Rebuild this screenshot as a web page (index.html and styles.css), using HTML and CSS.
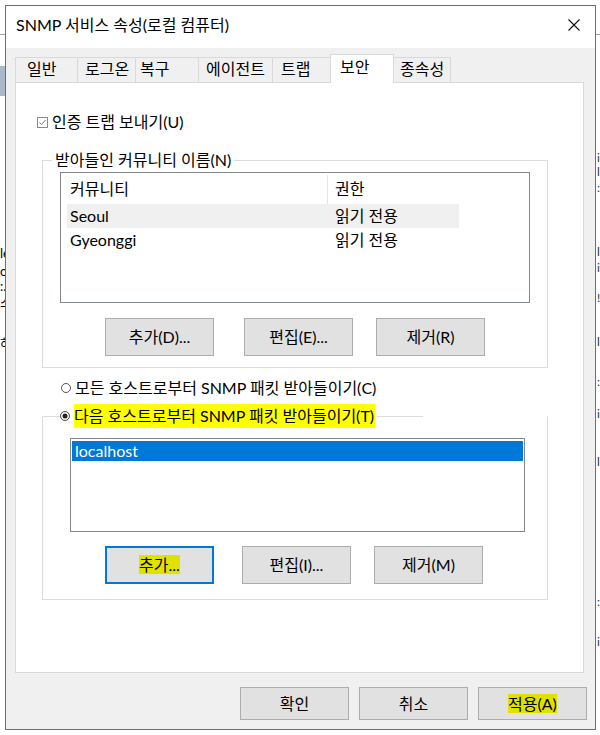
FILE: index.html
```html
<!DOCTYPE html>
<html lang="ko">
<head>
<meta charset="utf-8">
<link rel="stylesheet" href="styles.css">
</head>
<body>
<div class="desk-left">
  <div class="dl-blue"></div>
  <p class="dl-line l1">le</p>
  <p class="dl-line l2">on</p>
  <p class="dl-line l3">:.</p>
  <p class="dl-line l4">스</p>
  <p class="dl-line l5">하</p>
</div>
<div class="desk-right">
  <p class="dr-line d1">i</p>
  <p class="dr-line d2">l</p>
  <p class="dr-line d3">:</p>
  <p class="dr-line d4">l</p>
  <p class="dr-line d5">i</p>
  <p class="dr-line d6">!</p>
  <p class="dr-line d7">l</p>
  <p class="dr-line d8">:</p>
  <p class="dr-line d9">i</p>
  <p class="dr-line d10">l</p>
  <p class="dr-line d11">:</p>
  <p class="dr-line d12">i</p>
</div>
<div class="dialog">
  <div class="titlebar">
    <span class="title">SNMP 서비스 속성(로컬 컴퓨터)</span>
    <svg class="close" width="12" height="12" viewBox="0 0 12 12"><path d="M0.5 0.5 L11.5 11.5 M11.5 0.5 L0.5 11.5" stroke="#111" stroke-width="1.1" fill="none"/></svg>
  </div>
  <div class="client">
    <div class="tabs">
      <div class="tab t1">일반</div>
      <div class="tab t2">로그온</div>
      <div class="tab t3">복구</div>
      <div class="tab t4">에이전트</div>
      <div class="tab t5">트랩</div>
      <div class="tab t6 active">보안</div>
      <div class="tab t7">종속성</div>
    </div>
    <div class="panel">
      <div class="check">
        <svg class="checkbox" width="11" height="11" viewBox="0 0 11 11"><rect x="0.5" y="0.5" width="10" height="10" fill="#fff" stroke="#8a8a8a"/><path d="M2.5 5.5 L4.5 7.5 L8.5 3" stroke="#777" stroke-width="1" fill="none"/></svg>
        <span>인증 트랩 보내기(U)</span>
      </div>
      <fieldset class="group g1">
        <legend class="glabel">받아들인 커뮤니티 이름(N)</legend>
        <div class="listview">
          <div class="lv-header">
            <span class="col c1">커뮤니티</span>
            <span class="col c2">권한</span>
          </div>
          <div class="lv-row hot">
            <span class="col c1">Seoul</span>
            <span class="col c2">읽기 전용</span>
          </div>
          <div class="lv-row">
            <span class="col c1">Gyeonggi</span>
            <span class="col c2">읽기 전용</span>
          </div>
        </div>
        <div class="btnrow row1">
          <button class="btn b1">추가(D)...</button>
          <button class="btn b2">편집(E)...</button>
          <button class="btn b3">제거(R)</button>
        </div>
      </fieldset>
      <div class="radio r1">
        <svg class="rdot" width="10" height="10" viewBox="0 0 10 10"><circle cx="5" cy="5" r="4.5" fill="#fff" stroke="#555"/></svg>
        <span>모든 호스트로부터 SNMP 패킷 받아들이기(C)</span>
      </div>
      <fieldset class="group g2">
        <legend class="radio r2">
          <svg class="rdot" width="10" height="10" viewBox="0 0 10 10"><circle cx="5" cy="5" r="4.5" fill="#fff" stroke="#444"/><circle cx="5" cy="5" r="2.5" fill="#222"/></svg>
          <span class="hl">다음 호스트로부터 SNMP 패킷 받아들이기(T)</span>
        </legend>
        <div class="listbox">
          <div class="lb-item sel">localhost</div>
        </div>
        <div class="btnrow row2">
          <button class="btn b1 focus"><span class="hl-btn">추가...</span></button>
          <button class="btn b2">편집(I)...</button>
          <button class="btn b3">제거(M)</button>
        </div>
      </fieldset>
    </div>
    <div class="footer">
      <button class="btn fb">확인</button>
      <button class="btn fb">취소</button>
      <button class="btn fb"><span class="hl-btn">적용(A)</span></button>
    </div>
  </div>
</div>
</body>
</html>
```
FILE: styles.css
```css
* { box-sizing: border-box; }
html, body { margin: 0; padding: 0; }
body {
  width: 600px;
  height: 735px;
  overflow: hidden;
  position: relative;
  background: #ffffff;
  font-family: "Lato", "Noto Sans CJK KR", sans-serif;
  font-size: 16px;
  color: #000;
  padding: 5px 0 0 5px;
}

/* background windows peeking out at the edges */
.desk-left {
  position: absolute;
  left: 0;
  top: 34px;
  width: 40px;
  height: 701px;
  background: #fff;
  border-top: 1px solid #a0a0a0;
  font-size: 13px;
}
.dl-blue { height: 30px; margin-top: 31px; background: #aab8c8; }
.dl-line { margin: 0; position: absolute; left: 0; line-height: 16px; }
.l1 { top: 210px; }
.l2 { top: 228px; }
.l3 { top: 243px; }
.l4 { top: 259px; }
.l5 { top: 300px; }

.desk-right {
  position: absolute;
  left: 590px;
  top: 34px;
  width: 10px;
  height: 701px;
  background: #fff;
  border-top: 1px solid #a0a0a0;
  font-size: 12px;
  color: #333;
}
.dr-line { margin: 0; position: absolute; left: 7px; line-height: 14px; }
.d1 { top: 116px; }
.d2 { top: 130px; }
.d3 { top: 146px; }
.d4 { top: 210px; }
.d5 { top: 226px; }
.d6 { top: 256px; }
.d7 { top: 300px; }
.d8 { top: 340px; }
.d9 { top: 372px; }
.d10 { top: 420px; }
.d11 { top: 560px; }
.d12 { top: 600px; }

.dialog {
  position: relative;
  z-index: 5;
  width: 591px;
  height: 725px;
  border: 1px solid #6e6e6e;
  background: #f0f0f0;
  display: flex;
  flex-direction: column;
}

.titlebar {
  height: 42px;
  background: #fff;
  display: flex;
  align-items: center;
  padding: 0 15px 5px 10px;
  flex: none;
}
.title { flex: 1; line-height: 20px; }
.close { display: block; }

.client {
  flex: 1;
  padding: 6px 8px 0 9px;
  display: flex;
  flex-direction: column;
}

.tabs {
  display: flex;
  align-items: flex-end;
  height: 28px;
  position: relative;
  z-index: 2;
}
.tab {
  height: 25px;
  border: 1px solid #d9d9d9;
  border-bottom: none;
  border-right: none;
  background: #f0f0f0;
  line-height: 22px;
  white-space: nowrap;
}
.t1 { width: 62px; padding-left: 11px; }
.t2 { width: 58px; padding-left: 7px; }
.t3 { width: 63px; padding-left: 4px; }
.t4 { width: 74px; padding-left: 7px; }
.t5 { width: 58px; padding-left: 8px; }
.t6 {
  width: 64px;
  padding-left: 9px;
  height: 29px;
  background: #fff;
  border-right: 1px solid #d9d9d9;
  margin-bottom: -1px;
  line-height: 24px;
}
.t7 { width: 57px; padding-left: 6px; border-left: none; border-right: 1px solid #d9d9d9; }

.panel {
  width: 569px;
  height: 591px;
  background: #fff;
  border: 1px solid #d9d9d9;
  padding: 29px 0 0 0;
  position: relative;
  z-index: 1;
}

.check {
  display: flex;
  align-items: center;
  height: 20px;
  margin-left: 21px;
  line-height: 20px;
}
.checkbox { display: block; margin-right: 4px; }

.group {
  margin: 0 0 0 26px;
  padding: 0;
  width: 506px;
  border: 1px solid #dcdcdc;
  min-width: 0;
}
.g1 { margin-top: 18px; padding: 2px 0 11px 0; }
.glabel {
  margin-left: 9px;
  padding: 0 3px;
  line-height: 20px;
  height: 20px;
}

.listview {
  margin-left: 17px;
  width: 470px;
  height: 131px;
  border: 1px solid #828790;
  padding-top: 2px;
  background: #fff;
}
.lv-header {
  display: flex;
  height: 29px;
  width: 398px;
  line-height: 28px;
}
.lv-header .c1 { width: 267px; padding-left: 9px; border-right: 1px solid #e5e5e5; }
.lv-header .c2 { padding-left: 7px; }
.lv-row {
  display: flex;
  height: 24px;
  line-height: 24px;
  width: 392px;
  margin-left: 6px;
}
.lv-row .c1 { width: 262px; padding-left: 3px; }
.lv-row .c2 { padding-left: 6px; }
.hot { background: #f0f0f0; }

.btnrow { display: flex; height: 38px; }
.row1 { margin-top: 15px; margin-left: 62px; }
.row1 .b2 { margin-left: 30px; }
.row1 .b3 { margin-left: 23px; }
.row2 { margin-top: 14px; margin-left: 62px; }
.row2 .b2 { margin-left: 28px; }
.row2 .b3 { margin-left: 23px; }

.btn {
  width: 109px;
  height: 38px;
  background: #e1e1e1;
  border: 1px solid #adadad;
  font-family: inherit;
  font-size: 16px;
  color: #000;
  padding: 0;
  margin: 0;
  line-height: 20px;
}
.btn.focus { border: 2px solid #0078d7; }
.hl-btn { background: #e1e100; }

.radio {
  display: flex;
  align-items: center;
  line-height: 20px;
}
.r1 { height: 20px; margin: 10px 0 0 45px; }
.rdot { display: block; margin-right: 4px; }

.g2 {
  margin-top: 6px;
  padding: 10px 0 15px 0;
  border-top-color: transparent;
  background-image: linear-gradient(#dcdcdc, #dcdcdc);
  background-size: 381px 1px;
  background-position: 0 0;
  background-repeat: no-repeat;
  background-origin: border-box;
}
.r2 {
  margin-left: 17px;
  padding: 0 2px 0 0;
  height: 24px;
  background: #fff;
}
.hl { background: #ffff00; line-height: 24px; padding-right: 1px; }

.listbox {
  margin-left: 27px;
  width: 455px;
  height: 94px;
  border: 1px solid #828790;
  padding: 2px 1px;
  background: #fff;
}
.lb-item {
  height: 20px;
  line-height: 19px;
  padding-left: 3px;
}
.lb-item.sel { background: #0078d7; color: #fff; }

.footer {
  display: flex;
  gap: 10px;
  margin-top: 14px;
  padding-left: 225px;
}
.fb { height: 33px; }
```
